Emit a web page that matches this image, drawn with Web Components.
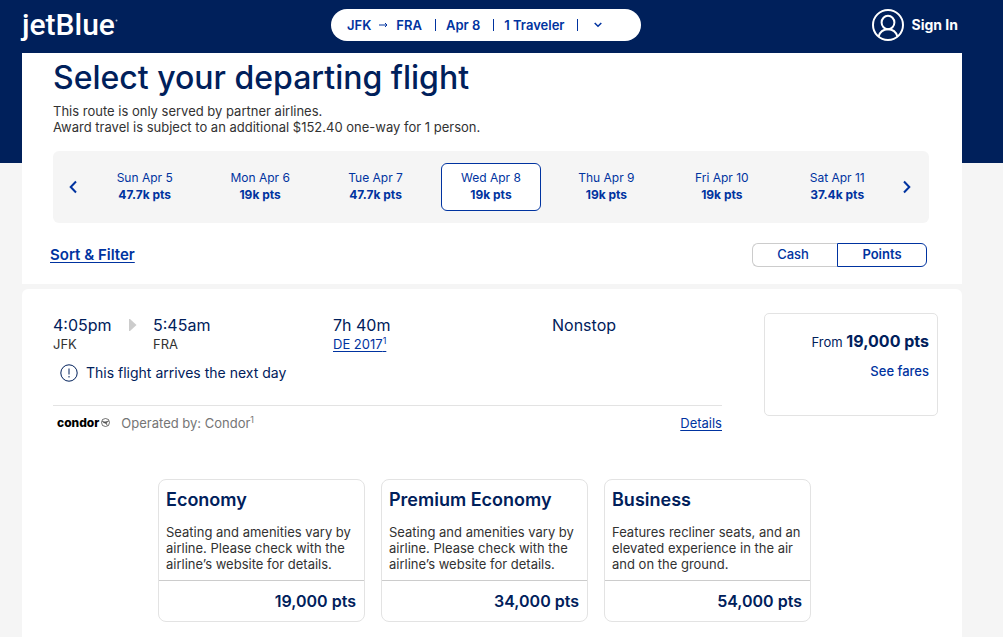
<!DOCTYPE html>
<html lang="en">
<head>
<meta charset="utf-8">
<meta name="viewport" content="width=device-width, initial-scale=1">
<title>Select your departing flight</title>
<style>
    body {
        --navy: #00205b;
        --blue: #0033a0;
        --ink: #323232;
        --muted: #757575;
        --line: #e3e3e3;
        --surface: #f5f5f5;
        margin: 0;
        background: var(--surface);
        color: var(--ink);
        font: 13px/16px Inter, "Liberation Sans", sans-serif;
    }
</style>
</head>
<body>
<booking-page>
    <site-header slot="header">
        <trip-summary from="JFK" to="FRA" date="Apr 8" travelers="1 Traveler"></trip-summary>
    </site-header>
    <search-panel>
        <span slot="title">Select your departing flight</span>
        <span slot="note">This route is only served by partner airlines.<br>Award travel is subject to an additional $152.40 one-way for 1 person.</span>
        <date-strip slot="dates">
            <date-option day="Sun Apr 5" points="47.7k pts"></date-option>
            <date-option day="Mon Apr 6" points="19k pts"></date-option>
            <date-option day="Tue Apr 7" points="47.7k pts"></date-option>
            <date-option day="Wed Apr 8" points="19k pts" selected></date-option>
            <date-option day="Thu Apr 9" points="19k pts"></date-option>
            <date-option day="Fri Apr 10" points="19k pts"></date-option>
            <date-option day="Sat Apr 11" points="37.4k pts"></date-option>
        </date-strip>
        <fare-toggle slot="toggle"></fare-toggle>
    </search-panel>
    <flight-card>
        <fare-card name="Economy" price="19,000 pts">Seating and amenities vary by airline. Please check with the airline’s website for details.</fare-card>
        <fare-card name="Premium Economy" price="34,000 pts">Seating and amenities vary by airline. Please check with the airline’s website for details.</fare-card>
        <fare-card name="Business" price="54,000 pts">Features recliner seats, and an elevated experience in the air and on the ground.</fare-card>
    </flight-card>
</booking-page>

<script>
// Shared reset for native controls inside each shadow root
const base = `
    *, *::before, *::after { box-sizing: border-box; }
    h1, h2, p, dl, dd, fieldset { margin: 0; padding: 0; border: 0; }
    button { margin: 0; padding: 0; border: 0; background: none; color: inherit; font: inherit; cursor: pointer; }
    svg { display: block; flex: none; }
`;

class BaseElement extends HTMLElement {
    constructor() {
        super();
        this.attachShadow({ mode: 'open' });
    }

    connectedCallback() {
        this.shadowRoot.innerHTML = `<style>${base}${this.styles()}</style>${this.template()}`;
    }

    attr(name) {
        return this.getAttribute(name) || '';
    }
}

class BookingPage extends BaseElement {
    styles() {
        return `
            :host {
                display: block;
                min-height: 100vh;
                background: linear-gradient(var(--navy) 163px, var(--surface) 163px);
            }
            main {
                display: flex;
                flex-direction: column;
                gap: 5px;
                margin: 0 41px 0 22px;
            }
        `;
    }

    template() {
        return `<slot name="header"></slot><main><slot></slot></main>`;
    }
}

class SiteHeader extends BaseElement {
    styles() {
        return `
            :host { display: block; color: #fff; }
            header {
                display: grid;
                grid-template-columns: 1fr auto 1fr;
                align-items: center;
                height: 53px;
                padding: 0 45px 4px 22px;
            }
            .logo {
                justify-self: start;
                display: flex;
                align-items: flex-start;
                color: inherit;
                font: 500 30px/40px Roboto, "Liberation Sans", sans-serif;
                text-decoration: none;
            }
            .logo svg { margin-top: 14px; }
            .account {
                justify-self: end;
                display: flex;
                align-items: center;
                gap: 8px;
                font-size: 14px;
                font-weight: 700;
            }
            ::slotted(trip-summary) { margin-right: 8px; }
        `;
    }

    template() {
        return `
            <header>
                <a class="logo" href="#">jetBlue<svg width="3" height="3" viewBox="0 0 3 3" aria-hidden="true"><circle cx="1.5" cy="1.5" r="1" fill="currentColor" opacity=".7"/></svg></a>
                <slot></slot>
                <button class="account" type="button">
                    <svg width="32" height="32" viewBox="0 0 32 32" fill="none" stroke="currentColor" stroke-width="2" aria-hidden="true">
                        <circle cx="16" cy="16" r="15"/>
                        <ellipse cx="16" cy="13.5" rx="6.4" ry="6.8"/>
                        <path d="M6.600 27.600C8 22.600 11 20.300 16 20.300s8 2.300 9.400 7.300"/>
                    </svg>
                    Sign In
                </button>
            </header>
        `;
    }
}

class TripSummary extends BaseElement {
    styles() {
        return `
            :host { display: block; }
            button {
                display: flex;
                align-items: center;
                width: 310px;
                height: 32px;
                padding: 0 16px;
                border-radius: 16px;
                background: #fff;
                color: var(--blue);
                font-size: 13px;
                font-weight: 600;
                white-space: nowrap;
            }
            .route { display: flex; align-items: center; gap: 8px; }
            .part { display: flex; align-items: center; margin-left: 13px; }
            .part::before {
                content: "";
                width: 1px;
                height: 12px;
                margin-right: 10px;
                background: currentColor;
            }
            .caret::before { margin-right: 16px; }
        `;
    }

    template() {
        return `
            <button type="button">
                <span class="route">
                    ${this.attr('from')}
                    <svg width="9" height="8" viewBox="0 0 9 8" fill="none" stroke="currentColor" aria-label="to"><path d="M0 4h8M6 2l2 2-2 2"/></svg>
                    ${this.attr('to')}
                </span>
                <span class="part">${this.attr('date')}</span>
                <span class="part">${this.attr('travelers')}</span>
                <span class="part caret">
                    <svg width="8" height="6" viewBox="0 0 8 6" fill="none" stroke="currentColor" stroke-width="1.5" aria-hidden="true"><path d="M.7 1L4 4.300 7.300 1"/></svg>
                </span>
            </button>
        `;
    }
}

class SearchPanel extends BaseElement {
    styles() {
        return `
            :host { display: block; background: #fff; }
            section { padding: 4px 33px 17px 31px; }
            h1 {
                color: var(--navy);
                font-size: 32px;
                font-weight: 500;
                line-height: 42px;
            }
            .note { margin: 4px 0 16px; }
            .tools {
                display: flex;
                align-items: center;
                justify-content: space-between;
                margin: 20px 2px 0 -3px;
            }
            .sort {
                color: var(--blue);
                font-size: 15px;
                font-weight: 600;
                text-decoration: underline;
                text-underline-offset: 2px;
            }
        `;
    }

    template() {
        return `
            <section>
                <h1><slot name="title"></slot></h1>
                <p class="note"><slot name="note"></slot></p>
                <slot name="dates"></slot>
                <div class="tools">
                    <button class="sort" type="button">Sort &amp; Filter</button>
                    <slot name="toggle"></slot>
                </div>
            </section>
        `;
    }
}

class DateStrip extends BaseElement {
    styles() {
        return `
            :host { display: block; }
            nav {
                display: flex;
                align-items: center;
                height: 72px;
                border-radius: 6px;
                background: var(--surface);
                color: var(--blue);
            }
            .days { flex: 1; display: flex; }
            .arrow {
                display: flex;
                align-items: center;
                justify-content: center;
                width: 34px;
                height: 48px;
            }
            .prev { padding-left: 6px; }
            .next { padding-right: 10px; }
        `;
    }

    template() {
        return `
            <nav aria-label="Departure date">
                <button class="arrow prev" type="button" aria-label="Previous dates">
                    <svg width="8" height="14" viewBox="0 0 8 14" fill="none" stroke="currentColor" stroke-width="2"><path d="M7 1.500L1.700 7 7 12.500"/></svg>
                </button>
                <div class="days"><slot></slot></div>
                <button class="arrow next" type="button" aria-label="Next dates">
                    <svg width="8" height="14" viewBox="0 0 8 14" fill="none" stroke="currentColor" stroke-width="2"><path d="M1 1.500L6.300 7 1 12.500"/></svg>
                </button>
            </nav>
        `;
    }
}

class DateOption extends BaseElement {
    styles() {
        return `
            :host { flex: 1; display: flex; justify-content: center; }
            button {
                display: flex;
                flex-direction: column;
                align-items: center;
                justify-content: center;
                width: 100px;
                height: 48px;
                padding-bottom: 2px;
                border: 1px solid transparent;
                border-radius: 6px;
                font-size: 12px;
                line-height: 17px;
                white-space: nowrap;
            }
            :host([selected]) button { border-color: var(--blue); background: #fff; }
        `;
    }

    template() {
        return `
            <button type="button" aria-pressed="${this.hasAttribute('selected')}">
                <span>${this.attr('day')}</span>
                <strong>${this.attr('points')}</strong>
            </button>
        `;
    }
}

class FareToggle extends BaseElement {
    styles() {
        return `
            :host { display: block; }
            fieldset { display: flex; color: var(--blue); font-weight: 500; }
            label {
                position: relative;
                display: flex;
                align-items: center;
                justify-content: center;
                width: 85px;
                height: 24px;
                padding: 0 4px 2px 0;
                border: 1px solid #ccc;
                border-right: 0;
                border-radius: 6px 0 0 6px;
                cursor: pointer;
            }
            label + label {
                width: 90px;
                padding-right: 0;
                border-right: 1px solid #ccc;
                border-radius: 0 6px 6px 0;
            }
            label:has(:checked) { border-color: var(--blue); font-weight: 600; }
            /* the native radio covers its label, invisible but focusable */
            input {
                position: absolute;
                inset: 0;
                width: 100%;
                height: 100%;
                margin: 0;
                opacity: 0;
                cursor: pointer;
            }
        `;
    }

    template() {
        return `
            <fieldset aria-label="Show fares in">
                <label><input type="radio" name="fare" value="cash">Cash</label>
                <label><input type="radio" name="fare" value="points" checked>Points</label>
            </fieldset>
        `;
    }
}

class FlightCard extends BaseElement {
    styles() {
        return `
            :host { display: block; border-radius: 6px; background: #fff; }
            a { color: var(--blue); text-underline-offset: 2px; }
            sup { font-size: 9px; line-height: 0; }
            .top { display: flex; gap: 42px; padding: 24px 24px 0 31px; }
            .info { flex: 1; }
            .times {
                display: grid;
                grid-template-columns: 100px 180fr 219fr 170fr;
                padding-top: 2px;
            }
            .big { color: var(--navy); font-size: 16px; line-height: 20px; }
            .depart { display: flex; align-items: center; justify-content: space-between; padding-right: 16px; }
            .small { line-height: 18px; }
            .notice {
                display: flex;
                align-items: center;
                gap: 8px;
                height: 20px;
                margin: 10px 0 22px;
                padding-left: 7px;
                color: var(--navy);
                font-size: 14px;
            }
            .operator {
                display: flex;
                align-items: center;
                height: 34px;
                padding-left: 4px;
                border-top: 1px solid var(--line);
                color: var(--muted);
            }
            .brand {
                display: flex;
                align-items: center;
                gap: 2px;
                margin-right: 11px;
                color: #000;
                font-size: 12px;
                font-weight: 800;
            }
            .operator a { margin-left: auto; }
            .price {
                width: 174px;
                height: 103px;
                padding: 16px 8px;
                border: 1px solid var(--line);
                border-radius: 5px;
                color: var(--navy);
                text-align: right;
                white-space: nowrap;
            }
            .price p { line-height: 22px; }
            .price strong { font-size: 16px; }
            .price button {
                margin-top: 10px;
                color: var(--blue);
                font-weight: 500;
            }
            .fares {
                display: grid;
                grid-template-columns: repeat(3, 1fr);
                gap: 16px;
                padding: 40px 151px 24px 136px;
            }
        `;
    }

    template() {
        return `
            <article>
                <div class="top">
                    <div class="info">
                        <div class="times">
                            <div>
                                <div class="big depart">
                                    4:05pm
                                    <svg width="8" height="12" viewBox="0 0 8 12" aria-hidden="true"><path d="M1 0l6.500 6L1 12H0V0z" fill="#ccc"/></svg>
                                </div>
                                <div class="small">JFK</div>
                            </div>
                            <div>
                                <div class="big">5:45am</div>
                                <div class="small">FRA</div>
                            </div>
                            <div>
                                <div class="big">7h 40m</div>
                                <div class="small"><a href="#">DE 2017<sup>1</sup></a></div>
                            </div>
                            <div class="big">Nonstop</div>
                        </div>
                        <p class="notice">
                            <svg width="18" height="18" viewBox="0 0 18 18" fill="none" stroke="currentColor" aria-hidden="true">
                                <circle cx="9" cy="9" r="8.2"/>
                                <path d="M9 4.500v6M9 12v1.500"/>
                            </svg>
                            This flight arrives the next day
                        </p>
                        <div class="operator">
                            <span class="brand">
                                condor
                                <svg width="9" height="9" viewBox="0 0 9 9" fill="none" stroke="#333" stroke-width=".7" aria-hidden="true">
                                    <circle cx="4.5" cy="4.5" r="4"/>
                                    <path d="M1 3l3 .8L8 2.800 5.500 5l1 2.500L4.500 5.500 2 4.500z" fill="#555" stroke-width=".2"/>
                                </svg>
                            </span>
                            <span>Operated by: Condor<sup>1</sup></span>
                            <a href="#">Details</a>
                        </div>
                    </div>
                    <div class="price">
                        <p>From <strong>19,000 pts</strong></p>
                        <button type="button">See fares</button>
                    </div>
                </div>
                <div class="fares"><slot></slot></div>
            </article>
        `;
    }
}

class FareCard extends BaseElement {
    styles() {
        return `
            :host {
                display: flex;
                flex-direction: column;
                border: 1px solid var(--line);
                border-radius: 8px;
            }
            .body { flex: 1; padding: 8px 7px; }
            h2 {
                margin-bottom: 12px;
                color: var(--navy);
                font-size: 18px;
                font-weight: 600;
                line-height: 24px;
            }
            .price {
                padding: 10px 8px;
                border-top: 1px solid #ccc;
                color: var(--navy);
                font-size: 16px;
                font-weight: 600;
                line-height: 20px;
                text-align: right;
            }
        `;
    }

    template() {
        return `
            <div class="body">
                <h2>${this.attr('name')}</h2>
                <p><slot></slot></p>
            </div>
            <div class="price">${this.attr('price')}</div>
        `;
    }
}

customElements.define('booking-page', BookingPage);
customElements.define('site-header', SiteHeader);
customElements.define('trip-summary', TripSummary);
customElements.define('search-panel', SearchPanel);
customElements.define('date-strip', DateStrip);
customElements.define('date-option', DateOption);
customElements.define('fare-toggle', FareToggle);
customElements.define('flight-card', FlightCard);
customElements.define('fare-card', FareCard);
</script>
</body>
</html>
